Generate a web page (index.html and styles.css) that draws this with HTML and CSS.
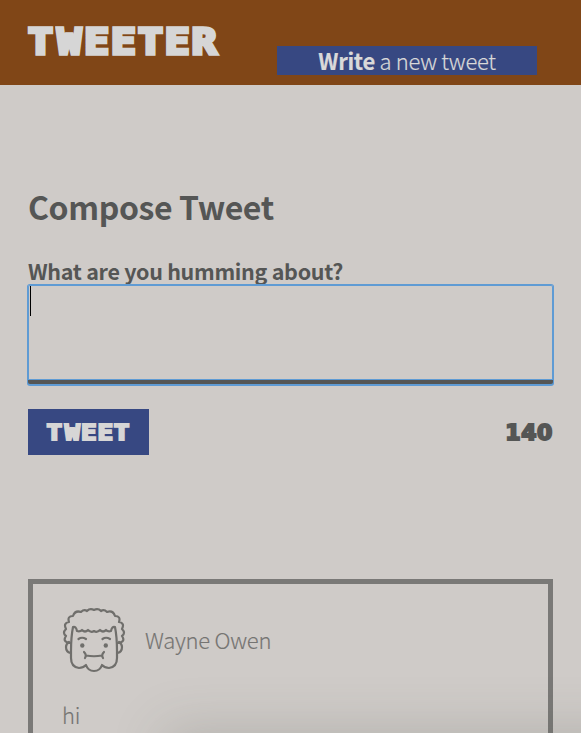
FILE: index.html
```html
<!DOCTYPE html>
<html lang="en">
<head>
<meta charset="utf-8">
<title>Tweeter</title>
<link rel="stylesheet" href="styles.css">
</head>
<body>
<header class="nav">
  <h1 class="logo">T<span class="narrow">W</span>EETER</h1>
  <button class="write"><b>Write</b> a new tweet</button>
</header>
<main class="page">
  <h2 class="title">Compose Tweet</h2>
  <form class="compose">
    <label class="label" for="tweet">What are you humming about?</label>
    <div class="field"><textarea class="input" id="tweet"></textarea><i class="caret"></i></div>
    <div class="actions">
      <button class="submit" type="button"><span class="submit-text">T<span class="narrow">W</span>EET</span></button>
      <output class="counter">140</output>
    </div>
  </form>
  <article class="tweet">
    <div class="author">
      <svg class="avatar" viewBox="0 0 64 66" fill="none" stroke="#706f6c" stroke-width="2.2" stroke-linecap="round" stroke-linejoin="round">
        <path d="M8 36Q0 35 4 29Q0 26 4 22Q1 16 7 15Q5 9 11 9Q13 3 19 5Q22 2 25 4Q28 1 32 3Q36 1 39 4Q42 2 45 5Q51 3 53 9Q59 9 57 15Q63 16 60 22Q64 26 60 29Q64 35 56 36"/>
        <path d="M9 44V51Q9 60 17 61Q21 61 24 58Q26 64 32 64Q38 64 40 58Q43 61 47 61Q55 60 55 51V44Q55 30 53 20Q50 19 49 24Q46 25 44 23Q41 26 38 23Q35 26 32 24Q29 26 26 23Q23 26 20 23Q18 25 15 24Q14 19 11 20Q9 30 9 44"/>
        <path d="M7 35Q4 37 4 40Q4 45 8.500 46M57 35Q60 37 60 40Q60 45 55.500 46M16.500 32Q20 29.500 24 32M40.500 32Q44 29.500 48 32M22 45Q25 48 23 51M42 45Q39 48 41 51M24 48.500Q32 50 40 48.500"/>
        <g fill="#706f6c" stroke="none"><circle cx="20.3" cy="38.5" r="2.2"/><circle cx="43.8" cy="38.5" r="2.2"/></g>
      </svg>
      <span class="name">Wayne Owen</span>
    </div>
    <p class="body">hi</p>
  </article>
</main>
<div class="overlay"><div class="shade"></div></div>
</body>
</html>
```
FILE: styles.css
```css
* { box-sizing: border-box; }
html, body { height: 100%; }
body {
  margin: 0;
  overflow: hidden;
  background: #cfcbc8;
  color: #555655;
  font-family: "Noto Sans CJK JP", "Noto Sans", sans-serif;
}
.nav {
  height: 85px;
  padding: 0 44px 0 28px;
  display: flex;
  justify-content: space-between;
  align-items: flex-start;
  background: #804617;
}
.logo, .submit {
  font-family: "DejaVu Sans Mono", monospace;
  font-weight: 700;
}
.logo {
  margin: 21px 0 0;
  font-size: 36px;
  line-height: 42px;
  letter-spacing: 1.7px;
  color: #d6d6d6;
  -webkit-text-stroke: 3.6px #d6d6d6;
  transform: scaleX(1.15);
  transform-origin: left;
}
.narrow { display: inline-block; letter-spacing: 0; transform: scaleX(.96); }
.logo .narrow { margin: 0 2.6px 0 1.2px; }
.submit .narrow { margin: 0 1.3px 0 .6px; }
.write {
  width: 260px;
  height: 29px;
  margin-top: 46px;
  padding: 0;
  border: 0;
  background: #374882;
  color: #d9d9d9;
  font-family: inherit;
  font-size: 22px;
  font-weight: 300;
  line-height: 27px;
  letter-spacing: -.3px;
  -webkit-text-stroke: .2px #d9d9d9;
}
.write b { font-weight: 700; }
.page { height: 648px; padding: 96px 28px 0; overflow: hidden; }
.title { margin: 0; font-size: 32px; line-height: 50px; font-weight: 700; letter-spacing: -.38px; }
.compose { margin-top: 26px; }
.label { display: block; height: 28px; font-size: 21.5px; line-height: 27px; font-weight: 700; letter-spacing: -.3px; white-space: nowrap; }
.field { position: relative; height: 100px; }
.input {
  display: block;
  width: 100%;
  height: 99px;
  padding: 0;
  resize: none;
  border: 0;
  border-bottom: 4px solid #555655;
  border-radius: 2px;
  background: #cfcbc8;
  outline: 0;
  box-shadow: 0 0 0 1px #5f9bd4, inset 0 0 0 1px #5f9bd4, 0 1px 0 1px #5f9bd4;
}
.caret { position: absolute; left: 2px; top: 1px; width: 1px; height: 30px; background: #000; }
.actions {
  margin-top: 24px;
  display: flex;
  justify-content: space-between;
  align-items: center;
}
.submit {
  width: 121px;
  height: 46px;
  padding: 0;
  border: 0;
  background: #374882;
  color: #d6d6d6;
  font-size: 22px;
  letter-spacing: .7px;
  -webkit-text-stroke: 2.1px #d6d6d6;
}
.submit-text { display: inline-block; transform: scaleX(1.18); }
.counter {
  font-family: "DejaVu Sans", sans-serif;
  font-weight: 700;
  font-size: 22px;
  letter-spacing: .6px;
  -webkit-text-stroke: 2px #555655;
}
.tweet {
  height: 300px;
  margin-top: 124px;
  padding: 23px 29px;
  border: 5px solid #7a7977;
  color: #757472;
  font-size: 22px;
  font-weight: 300;
  letter-spacing: -.25px;
  -webkit-text-stroke: .15px #757472;
}
.author { display: flex; align-items: center; gap: 19px; }
.avatar { width: 64px; height: 66px; }
.name { margin-top: -2px; }
.body { margin: 26px 0 0; line-height: 30px; }
.overlay { position: absolute; inset: 0; overflow: hidden; pointer-events: none; }
.shade {
  position: absolute;
  left: 180px;
  right: -80px;
  top: 745px;
  height: 100px;
  box-shadow: 0 0 52px 16px rgba(85, 92, 78, .21);
}
```
